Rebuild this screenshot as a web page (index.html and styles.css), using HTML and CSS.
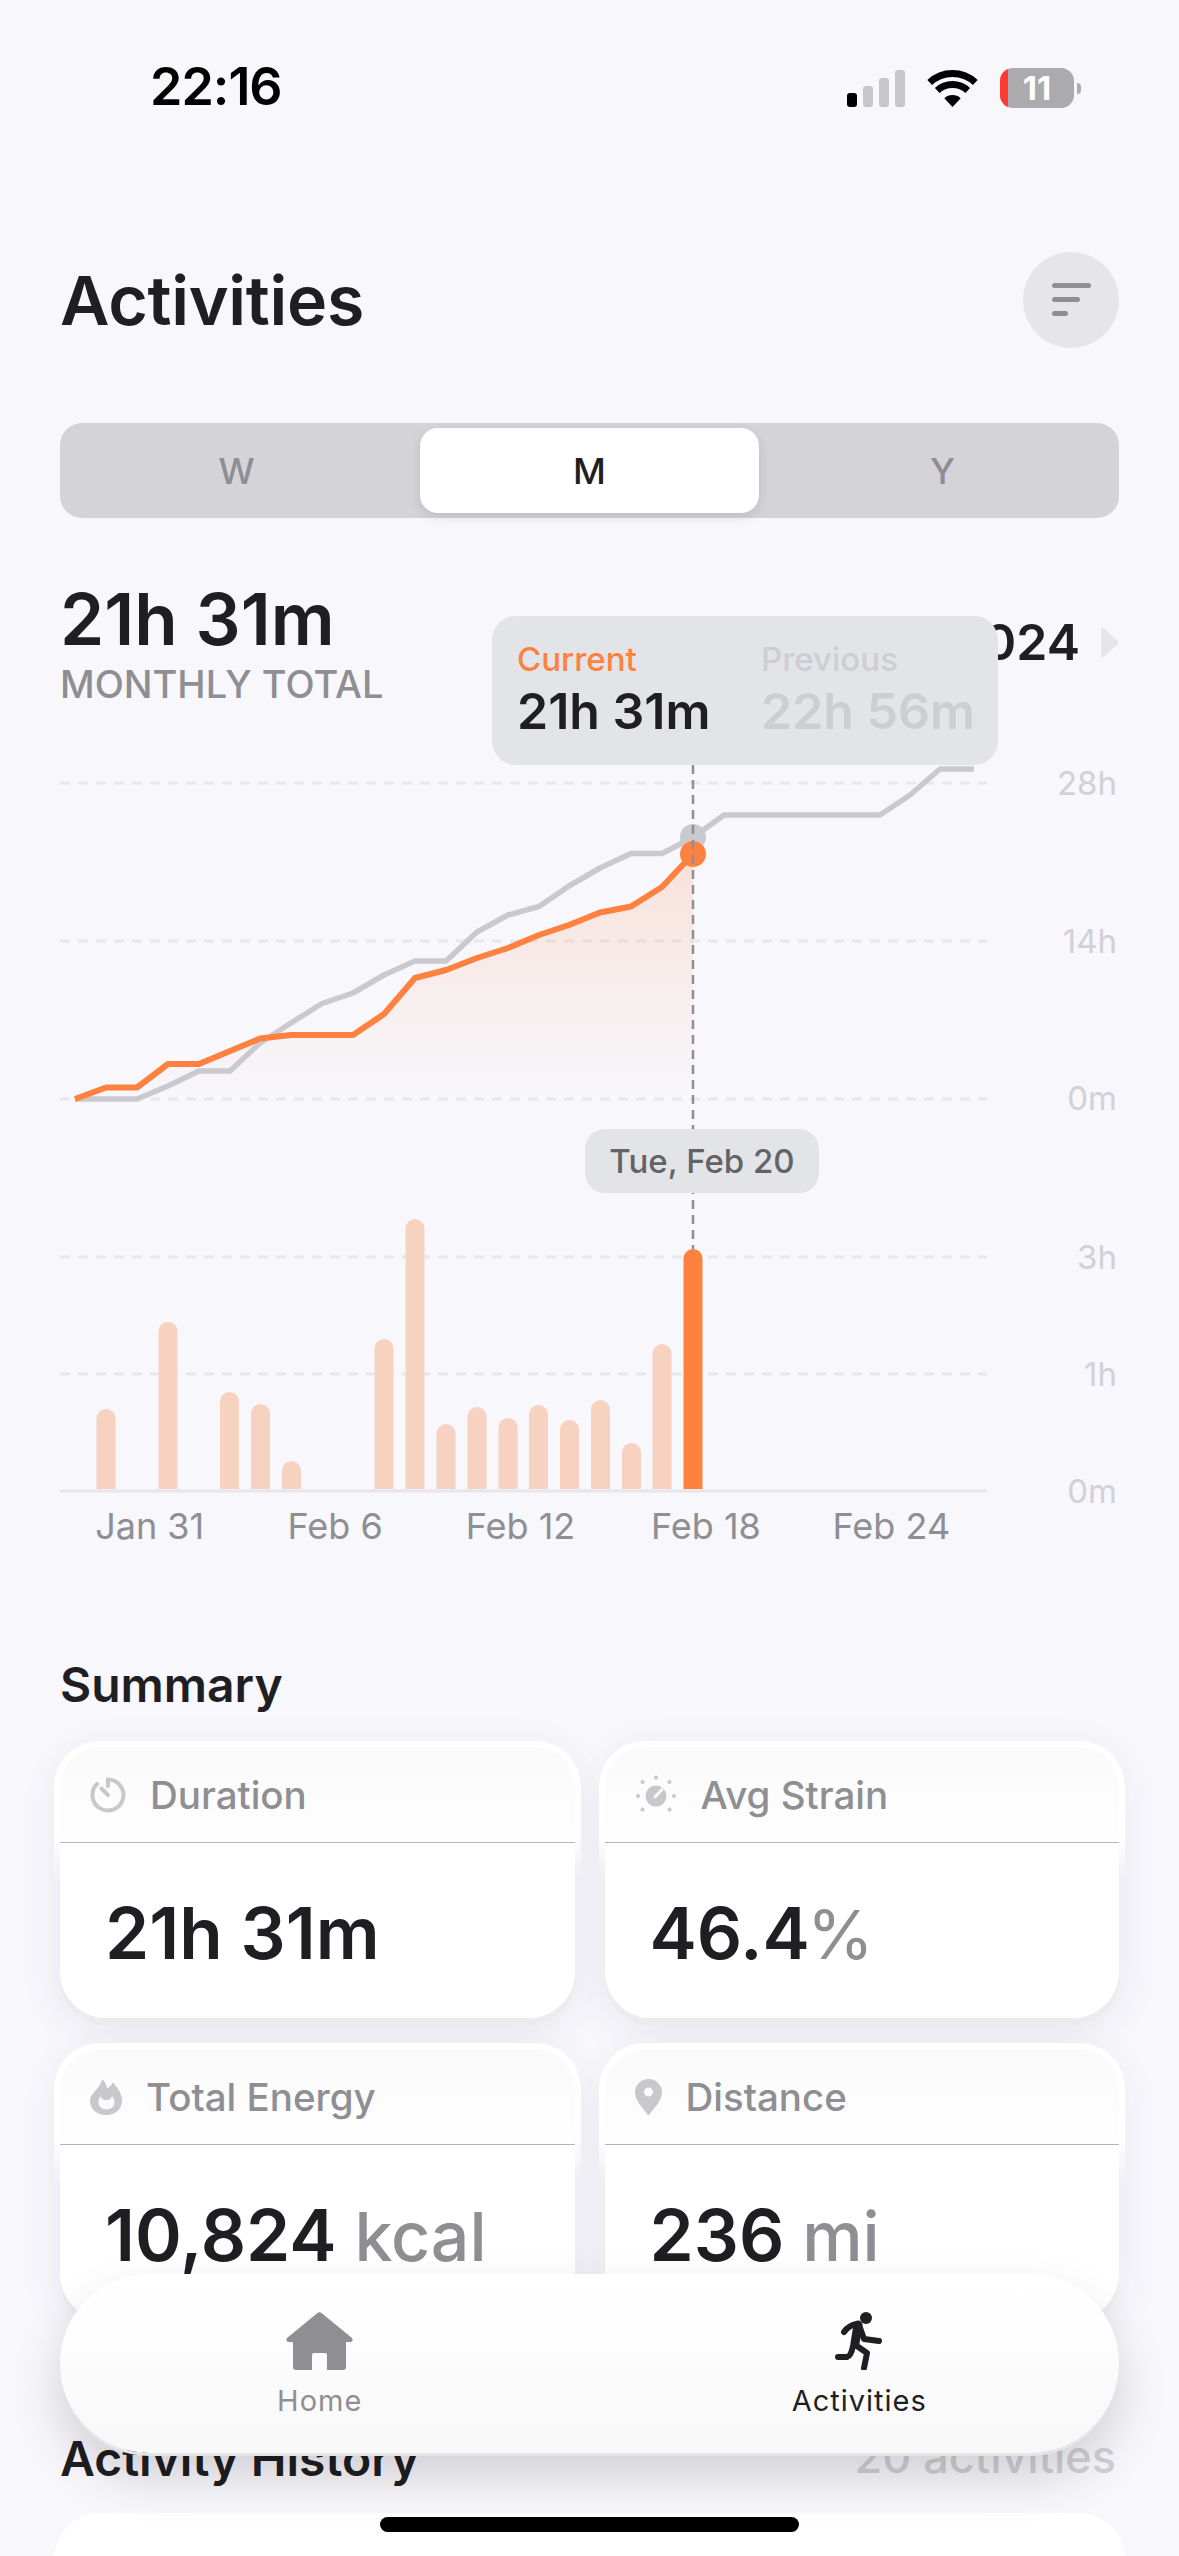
FILE: index.html
```html
<!DOCTYPE html>
<html lang="en">
<head>
    <meta charset="UTF-8">
    <meta name="viewport" content="width=device-width, initial-scale=1.0">
    <title>Activities</title>
    <link rel="stylesheet" href="styles.css">
</head>
<body>
    <div class="status-bar">
        <div class="status-time">22:16</div>
        <div class="status-icons">
            <svg class="signal-icon" width="58" height="37" viewBox="0 0 58 37">
                <rect class="signal-on" x="0" y="23" width="10" height="14" rx="3"/>
                <rect class="signal-off" x="16" y="16" width="10" height="21" rx="3"/>
                <rect class="signal-off" x="32" y="8" width="10" height="29" rx="3"/>
                <rect class="signal-off" x="48" y="0" width="10" height="37" rx="3"/>
            </svg>
            <svg class="wifi-icon" width="51" height="37" viewBox="0 0 51 37">
                <path class="wifi-arc" d="M2.7 12.5A33.5 33.5 0 0 1 48.3 12.5"/>
                <path class="wifi-arc" d="M10.2 20.5A22.5 22.5 0 0 1 40.8 20.5"/>
                <path class="wifi-dot" d="M25.5 37L17.3 28.2A12 12 0 0 1 33.7 28.2Z"/>
            </svg>
            <div class="battery">
                <div class="battery-body">
                    <span class="battery-low"></span>
                    <span class="battery-text">11</span>
                </div>
                <span class="battery-nub"></span>
            </div>
        </div>
    </div>

    <main class="page">
        <div class="title-row">
            <h1>Activities</h1>
            <button class="filter-btn">
                <svg width="39" height="33" viewBox="0 0 39 33">
                    <rect x="0" y="0" width="39" height="5" rx="2.5"/>
                    <rect x="0" y="14" width="28" height="5" rx="2.5"/>
                    <rect x="0" y="28" width="16" height="5" rx="2.5"/>
                </svg>
            </button>
        </div>

        <div class="segmented">
            <div class="segment">W</div>
            <div class="segment segment-active">M</div>
            <div class="segment">Y</div>
        </div>

        <section class="overview">
            <div class="total-row">
                <div>
                    <div class="total-value">21h 31m</div>
                    <div class="total-label">MONTHLY TOTAL</div>
                </div>
                <div class="period">
                    <span>Feb 2024</span>
                    <svg width="18" height="31" viewBox="0 0 18 31">
                        <path d="M0 3Q0 -1 3 1.500L16.500 13.500Q18 15.500 16.500 17.500L3 29.500Q0 32 0 28Z"/>
                    </svg>
                </div>
            </div>

            <svg class="chart" width="1059" height="752" viewBox="60 760 1059 752">
                <defs>
                    <linearGradient id="area-fill" x1="0" y1="0" x2="0" y2="1">
                        <stop class="area-top" offset="0"/>
                        <stop class="area-bottom" offset="1"/>
                    </linearGradient>
                </defs>

                <path class="grid-line" d="M60 783H987M60 941H987M60 1099H987M60 1257H987M60 1374H987"/>
                <path class="axis-line" d="M60 1491H987"/>

                <text class="y-label" x="1117" y="795">28h</text>
                <text class="y-label" x="1117" y="953">14h</text>
                <text class="y-label" x="1117" y="1110">0m</text>
                <text class="y-label" x="1117" y="1269">3h</text>
                <text class="y-label" x="1117" y="1386">1h</text>
                <text class="y-label" x="1117" y="1503">0m</text>

                <path class="area" d="M75 1099L106 1087.500L137 1087.500L168 1064L199 1064L230 1051L260 1038.500L291 1035L322 1035L353 1035L384 1014L415 978L446 970L477 958L508 948L539 935L569 925L600 912.500L631 906.500L662 887L693 854V1099Z"/>
                <path class="line-prev" d="M75 1099L106 1099L137 1099L168 1086L199 1071L230 1071L260 1043L291 1023L322 1003.500L353 993L384 975L415 961L446 961L477 932L508 915L539 906.500L569 886L600 868L631 853.500L662 853.500L693 837.500L724 815L755 815L786 815L817 815L848 815L880 815L910 795L940 769L974 769"/>
                <path class="line-cur" d="M75 1099L106 1087.500L137 1087.500L168 1064L199 1064L230 1051L260 1038.500L291 1035L322 1035L353 1035L384 1014L415 978L446 970L477 958L508 948L539 935L569 925L600 912.500L631 906.500L662 887L693 854"/>

                <path class="bar" d="M96.500 1489V1418.500a9.500 9.500 0 0 1 19 0V1489Z"/>
                <path class="bar" d="M158.500 1489V1331.500a9.500 9.500 0 0 1 19 0V1489Z"/>
                <path class="bar" d="M220 1489V1401.500a9.500 9.500 0 0 1 19 0V1489Z"/>
                <path class="bar" d="M251 1489V1413.500a9.500 9.500 0 0 1 19 0V1489Z"/>
                <path class="bar" d="M282 1489V1470.500a9.500 9.500 0 0 1 19 0V1489Z"/>
                <path class="bar" d="M374.500 1489V1348.500a9.500 9.500 0 0 1 19 0V1489Z"/>
                <path class="bar" d="M405.500 1489V1228.500a9.500 9.500 0 0 1 19 0V1489Z"/>
                <path class="bar" d="M436.500 1489V1433.500a9.500 9.500 0 0 1 19 0V1489Z"/>
                <path class="bar" d="M467.500 1489V1416.500a9.500 9.500 0 0 1 19 0V1489Z"/>
                <path class="bar" d="M498.500 1489V1427.500a9.500 9.500 0 0 1 19 0V1489Z"/>
                <path class="bar" d="M529 1489V1414.500a9.500 9.500 0 0 1 19 0V1489Z"/>
                <path class="bar" d="M560 1489V1429.500a9.500 9.500 0 0 1 19 0V1489Z"/>
                <path class="bar" d="M591 1489V1409.500a9.500 9.500 0 0 1 19 0V1489Z"/>
                <path class="bar" d="M622 1489V1452.500a9.500 9.500 0 0 1 19 0V1489Z"/>
                <path class="bar" d="M652.500 1489V1353.500a9.500 9.500 0 0 1 19 0V1489Z"/>
                <path class="bar-active" d="M683.500 1489V1258.500a9.500 9.500 0 0 1 19 0V1489Z"/>

                <circle class="dot-prev" cx="693" cy="837" r="13"/>
                <circle class="dot-cur" cx="693" cy="854" r="13"/>
                <path class="cursor-line" d="M693 765V1249"/>
            </svg>

            <div class="x-axis">
                <span>Jan 31</span>
                <span>Feb 6</span>
                <span>Feb 12</span>
                <span>Feb 18</span>
                <span>Feb 24</span>
            </div>

            <div class="compare-tip">
                <div>
                    <div class="tip-label tip-current">Current</div>
                    <div class="tip-value">21h 31m</div>
                </div>
                <div class="tip-muted">
                    <div class="tip-label">Previous</div>
                    <div class="tip-value">22h 56m</div>
                </div>
            </div>
            <div class="date-tip">Tue, Feb 20</div>
        </section>

        <h2 class="summary-title">Summary</h2>
        <div class="cards">
            <div class="card">
                <div class="card-head">
                    <svg class="card-icon" width="36" height="36" viewBox="0 0 36 36">
                        <path class="icon-stroke" d="M18 9V2.500A15.500 15.500 0 1 1 7 7"/>
                        <path class="icon-stroke" d="M18 18L11.500 11.500"/>
                    </svg>
                    <span>Duration</span>
                </div>
                <div class="card-rule"></div>
                <div class="card-value">21h 31m</div>
            </div>
            <div class="card">
                <div class="card-head">
                    <svg class="card-icon card-icon-wide" width="42" height="42" viewBox="0 0 42 42">
                        <circle class="icon-fill" cx="21" cy="22" r="10.500"/>
                        <path class="icon-cut" d="M20 23L27 15.500"/>
                        <circle class="icon-fill" cx="21" cy="3.500" r="2"/>
                        <circle class="icon-fill" cx="7.500" cy="8" r="2"/>
                        <circle class="icon-fill" cx="34.500" cy="8" r="2"/>
                        <circle class="icon-fill" cx="3" cy="22" r="2"/>
                        <circle class="icon-fill" cx="39" cy="22" r="2"/>
                        <circle class="icon-fill" cx="7.500" cy="35.500" r="2"/>
                        <circle class="icon-fill" cx="34.500" cy="35.500" r="2"/>
                    </svg>
                    <span>Avg Strain</span>
                </div>
                <div class="card-rule"></div>
                <div class="card-value">46.4<small class="unit-thin">%</small></div>
            </div>
            <div class="card">
                <div class="card-head">
                    <svg class="card-icon" width="32" height="36" viewBox="0 0 32 36">
                        <path class="icon-fill" d="M16 36C7 36 0 30 0 22C0 14 9 11 12.500 0C15 3 16.500 6 17 9.500C19 8.500 21.500 6.500 22.700 3.300C27 8 32 14 32 22C32 30 25 36 16 36Z"/>
                        <path class="icon-cut-fill" d="M8.500 23.500C8.500 20.500 9.500 18.500 10.500 17.500C11.500 20 13 21 16 21C19 21 21 20 22 17C23.500 19 24.500 21 24.500 23.500C24.500 27.500 21 30.500 16.500 30.500C12 30.500 8.500 27.500 8.500 23.500Z"/>
                    </svg>
                    <span>Total Energy</span>
                </div>
                <div class="card-rule"></div>
                <div class="card-value">10,824 <small>kcal</small></div>
            </div>
            <div class="card">
                <div class="card-head">
                    <svg class="card-icon" width="27" height="36" viewBox="0 0 27 36">
                        <path class="icon-fill" d="M13.500 0C21 0 27 6 27 13.500C27 22 18 30 14.500 35.500Q13.500 36.500 12.500 35.500C9 30 0 22 0 13.500C0 6 6 0 13.500 0Z"/>
                        <circle class="icon-cut-fill" cx="13.500" cy="13" r="4.500"/>
                    </svg>
                    <span>Distance</span>
                </div>
                <div class="card-rule"></div>
                <div class="card-value">236 <small>mi</small></div>
            </div>
        </div>

        <div class="history-head">
            <h2>Activity History</h2>
            <span class="history-count">20 activities</span>
        </div>
        <div class="history-card"></div>
    </main>

    <nav class="tab-bar">
        <div class="tab">
            <svg width="67" height="58" viewBox="0 0 67 58">
                <path class="tab-icon-muted" d="M31.500 1Q33.500 -0.500 35.500 1L66 26Q68 30 63 30L60 30L60 55Q60 58 57 58L41 58L41 43Q41 41 39 41L28 41Q26 41 26 43L26 58L10 58Q7 58 7 55L7 30L4 30Q-1 30 1 26Z"/>
            </svg>
            <span>Home</span>
        </div>
        <div class="tab tab-active">
            <svg width="48" height="58" viewBox="0 0 48 58">
                <circle class="runner-head" cx="31" cy="6" r="6"/>
                <path class="runner-body" d="M23 13L20 31"/>
                <path class="runner-limb" d="M22 12Q14 13 9 20"/>
                <path class="runner-limb" d="M24 13L29 27L44 29"/>
                <path class="runner-limb" d="M19 32L32 41L29 56"/>
                <path class="runner-limb" d="M18 34Q16 44 12 45L3 45"/>
            </svg>
            <span>Activities</span>
        </div>
    </nav>
    <div class="home-bar"></div>
</body>
</html>
```

FILE: styles.css
```css
* {
    box-sizing: border-box;
}
html, body {
    margin: 0;
    padding: 0;
}
body {
    position: relative;
    width: 1179px;
    height: 2556px;
    overflow: hidden;
    font-family: Inter, "Noto Sans", sans-serif;
    background-color: #F7F7FC;
    color: #1F1F23;
}

/* status bar */
.status-bar {
    display: flex;
    justify-content: space-between;
    align-items: flex-start;
    height: 140px;
    padding: 61px 98px 0 150px;
}
.status-time {
    font-size: 52px;
    line-height: 52px;
    font-weight: 600;
    letter-spacing: -1px;
    color: #000;
}
.status-icons {
    display: flex;
    align-items: center;
    gap: 22px;
    padding-top: 7px;
}
.signal-on, .wifi-dot {
    fill: #000;
}
.signal-off {
    fill: #C7C7C9;
}
.wifi-arc {
    fill: none;
    stroke: #000;
    stroke-width: 7;
}
.battery {
    display: flex;
    align-items: center;
    gap: 3px;
}
.battery-body {
    position: relative;
    width: 74px;
    height: 40px;
    border-radius: 13px;
    overflow: hidden;
    background-color: #ABABAD;
    text-align: center;
}
.battery-low {
    position: absolute;
    left: 0;
    top: 0;
    bottom: 0;
    width: 8px;
    background-color: #FF3B30;
}
.battery-text {
    position: relative;
    color: #fff;
    font-size: 33px;
    line-height: 40px;
    font-weight: 700;
}
.battery-nub {
    width: 4px;
    height: 11px;
    border-radius: 0 4px 4px 0;
    background-color: #ABABAD;
}

.page {
    padding: 0 60px;
}

/* header */
.title-row {
    display: flex;
    justify-content: space-between;
    align-items: center;
    margin-top: 111px;
    height: 97px;
}
h1 {
    margin: 0;
    font-size: 68px;
    line-height: 80px;
    font-weight: 600;
    letter-spacing: -0.3px;
}
.filter-btn {
    display: flex;
    align-items: center;
    justify-content: center;
    width: 96px;
    height: 96px;
    padding: 0 0 0 1px;
    border: none;
    border-radius: 50%;
    background-color: #E5E5EA;
}
.filter-btn rect {
    fill: #8E8E93;
}

.segmented {
    display: grid;
    grid-template-columns: repeat(3, 1fr);
    margin-top: 75px;
    height: 95px;
    padding: 5px 0;
    border-radius: 22px;
    background-color: #D3D3D8;
}
.segment {
    display: flex;
    align-items: center;
    justify-content: center;
    margin: 0 7px;
    border-radius: 18px;
    font-size: 36px;
    font-weight: 500;
    color: #8E8E93;
}
.segment-active {
    background-color: #fff;
    color: #1F1F23;
    box-shadow: 0 4px 12px rgba(0, 0, 0, 0.1);
}

/* totals + chart */
.overview {
    position: relative;
    margin-top: 67px;
}
.total-row {
    display: flex;
    justify-content: space-between;
    align-items: flex-start;
}
.total-value {
    font-size: 71px;
    line-height: 68px;
    font-weight: 600;
}
.total-label {
    margin-top: 12px;
    font-size: 38px;
    line-height: 38px;
    font-weight: 500;
    color: #8E8E93;
}
.period {
    display: flex;
    align-items: center;
    gap: 21px;
    margin-top: 32px;
    font-size: 50px;
    line-height: 50px;
    font-weight: 600;
}
.period path {
    fill: #E5E5EA;
}
.chart {
    display: block;
    margin-top: 57px;
}
.grid-line {
    fill: none;
    stroke: #E8E8EC;
    stroke-width: 3;
    stroke-dasharray: 10 8;
}
.axis-line {
    fill: none;
    stroke: #E5E5EA;
    stroke-width: 3;
}
.y-label {
    font-size: 33px;
    fill: #D1D1D6;
    text-anchor: end;
}
.area {
    fill: url(#area-fill);
}
.area-top {
    stop-color: #FF7F3F;
    stop-opacity: 0.18;
}
.area-bottom {
    stop-color: #FF7F3F;
    stop-opacity: 0;
}
.line-prev, .line-cur {
    fill: none;
    stroke-linejoin: round;
}
.line-prev {
    stroke: #C9C9CE;
    stroke-width: 5.5;
}
.line-cur {
    stroke: #FF813F;
    stroke-width: 6;
}
.bar {
    fill: #F8D2C0;
}
.bar-active {
    fill: #FF813F;
}
.dot-prev {
    fill: #C9C9CE;
}
.dot-cur {
    fill: #FF813F;
}
.cursor-line {
    fill: none;
    stroke: #8E8E93;
    stroke-width: 2.5;
    stroke-dasharray: 9 6;
}
.x-axis {
    display: flex;
    width: 927px;
    margin: -2px 0 0 -3px;
    font-size: 36px;
    line-height: 33px;
    color: #8E8E93;
}
.x-axis span {
    flex: 1;
    text-align: center;
}

.compare-tip {
    position: absolute;
    left: 432px;
    top: 31px;
    display: grid;
    grid-template-columns: 244px 1fr;
    width: 506px;
    height: 149px;
    padding: 27px 0 0 25px;
    border-radius: 24px;
    background-color: #E3E4E8;
}
.tip-label {
    font-size: 33px;
    line-height: 32px;
    font-weight: 500;
}
.tip-current {
    color: #FF813F;
}
.tip-value {
    margin-top: 12px;
    font-size: 50px;
    line-height: 48px;
    font-weight: 600;
}
.tip-muted {
    color: #CDCED2;
}
.date-tip {
    position: absolute;
    left: 525px;
    top: 544px;
    display: flex;
    align-items: center;
    justify-content: center;
    width: 234px;
    height: 64px;
    border-radius: 20px;
    background-color: #E3E4E8;
    color: #636366;
    font-size: 33px;
    font-weight: 500;
}

/* summary */
.summary-title {
    margin: 118px 0 0;
    font-size: 48px;
    line-height: 48px;
    font-weight: 600;
}
.cards {
    display: grid;
    grid-template-columns: 1fr 1fr;
    gap: 25px 30px;
    margin-top: 32px;
}
.card {
    position: relative;
    height: 277px;
    border-radius: 46px;
    background-color: #fff;
    box-shadow: 0 7px 0 #ECECEF, 0 10px 40px rgba(60, 60, 80, 0.09);
}
.card::before {
    content: "";
    position: absolute;
    left: -6px;
    right: -6px;
    top: 95px;
    height: 45px;
    background: linear-gradient(#fff, rgba(255, 255, 255, 0));
}
.card-head {
    position: relative;
    display: flex;
    align-items: center;
    gap: 24px;
    height: 101px;
    margin: 0 -6px;
    padding: 0 0 0 30px;
    border: 6px solid #fff;
    border-bottom: none;
    border-radius: 46px 46px 0 0;
    background: linear-gradient(#FAFAFB, #FEFEFE);
    font-size: 38.5px;
    font-weight: 500;
    color: #8E8E93;
}
.card-rule {
    position: relative;
    height: 1px;
    background-color: #B4B4B8;
}
.card-value {
    position: relative;
    padding: 55px 0 0 45px;
    font-size: 71px;
    line-height: 70px;
    font-weight: 600;
}
.card-value small {
    font-size: 68px;
    font-weight: 500;
    color: #8E8E93;
}
.card-value .unit-thin {
    margin-left: -3px;
    font-weight: 400;
}
.icon-fill {
    fill: #C7C7CC;
}
.icon-stroke {
    fill: none;
    stroke: #C7C7CC;
    stroke-width: 4;
    stroke-linecap: round;
}
.icon-cut {
    fill: none;
    stroke: #FAFAFB;
    stroke-width: 3;
    stroke-linecap: round;
}
.icon-cut-fill {
    fill: #FAFAFB;
}

/* history */
.history-head {
    display: flex;
    justify-content: space-between;
    align-items: flex-end;
    margin-top: 113px;
}
.history-head h2 {
    margin: 0;
    font-size: 48px;
    line-height: 48px;
    font-weight: 600;
}
.history-count {
    padding: 0 3px 2px 0;
    font-size: 45px;
    line-height: 48px;
    font-weight: 500;
    color: #D1D1D6;
}
.history-card {
    height: 300px;
    margin: 30px -6px 0;
    border-radius: 46px;
    background-color: #fff;
}

/* floating tab bar */
.tab-bar {
    position: absolute;
    left: 60px;
    top: 2274px;
    display: flex;
    justify-content: center;
    gap: 20px;
    width: 1059px;
    height: 179px;
    padding-top: 38px;
    border-radius: 90px;
    background: linear-gradient(#fff, #F8F8F9);
    box-shadow: 0 3px 0 #E6E6E8, 0 24px 50px rgba(0, 0, 0, 0.16);
}
.tab {
    display: flex;
    flex-direction: column;
    align-items: center;
    width: 521px;
    font-size: 29px;
    color: #8E8E93;
}
.tab span {
    margin-top: 15px;
    line-height: 32px;
    letter-spacing: 1px;
}
.tab-active {
    color: #1F1F23;
}
.tab-icon-muted {
    fill: #8E8E93;
}
.runner-head {
    fill: #1F1F23;
}
.runner-body, .runner-limb {
    fill: none;
    stroke: #1F1F23;
    stroke-linecap: round;
    stroke-linejoin: round;
}
.runner-body {
    stroke-width: 9;
}
.runner-limb {
    stroke-width: 6;
}

.home-bar {
    position: absolute;
    left: 380px;
    top: 2517px;
    width: 419px;
    height: 15px;
    border-radius: 8px;
    background-color: #000;
}
```
